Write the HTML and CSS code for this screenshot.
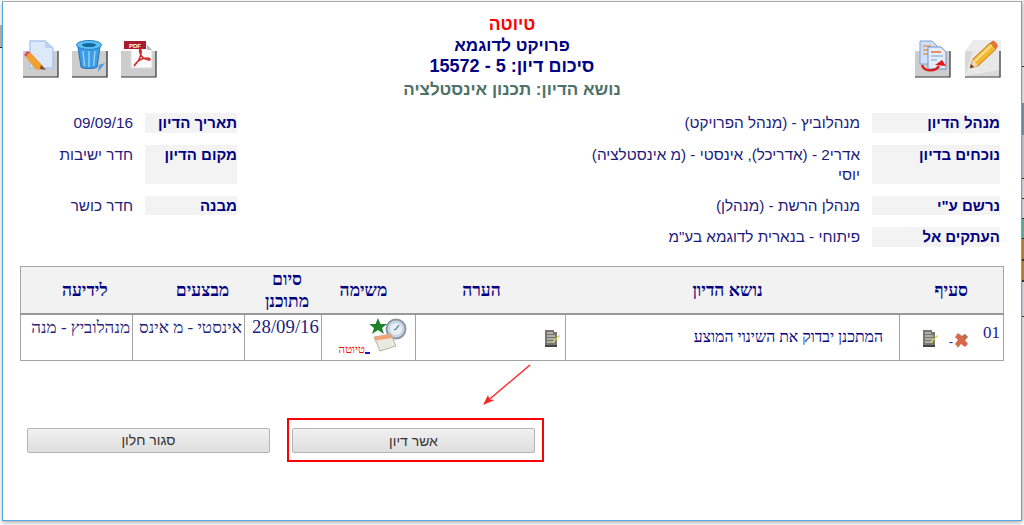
FILE: index.html
```html
<!DOCTYPE html>
<html lang="he" dir="rtl">
<head>
<meta charset="utf-8">
<title>טיוטה</title>
<link rel="stylesheet" href="styles.css">
</head>
<body>
<div class="desk">
  <main class="window">
    <header class="top">
      <div class="tools tools-end">
        <!-- pencil -->
        <svg class="tool" viewBox="0 0 36 38">
          <path d="M0 11L8 0H36V37H0z" fill="#ececec"/>
          <path d="M0 36V11H35V36z" fill="#d9d9d9"/>
          <path d="M0 36L8 11H35V30z" fill="#e8e8e8"/>
          <path d="M35 11V37H0" fill="none" stroke="#333" stroke-width="1.2"/>
          <path d="M8 19L25 3l6 6L13 26 5 28z" fill="#f2b632" stroke="#c77a1c" stroke-width="1"/>
          <path d="M10 21L27 5" stroke="#fbe08a" stroke-width="2"/>
          <path d="M25 3l2-2c2-1 5 2 6 5l-2 3z" fill="#e0763a"/>
          <path d="M8 19l5 7-8 2z" fill="#f0d9b0"/>
          <path d="M5 28l1-4 3 3z" fill="#5a3a1a"/>
        </svg>
        <!-- copy with red arrow -->
        <svg class="tool" viewBox="0 0 36 38">
          <rect x="0" y="11" width="35" height="26" fill="#cdcdcd"/>
          <path d="M35 11V37H0" fill="none" stroke="#333" stroke-width="1.2"/>
          <path d="M5 1H17L22 6V24H5z" fill="#cfe0f6" stroke="#7f9fd6"/>
          <path d="M8 6H16M8 10H18M8 14H18" stroke="#e8955a" stroke-width="1.3"/>
          <path d="M13 7H26L31 12V29H13z" fill="#e4eefb" stroke="#6f90cc"/>
          <path d="M16 12H26" stroke="#e8753a" stroke-width="1.6"/>
          <path d="M16 16H28M16 20H22" stroke="#9fb8e0" stroke-width="1.3"/>
          <path d="M7 25c2 7 13 7 17 1" fill="none" stroke="#e01818" stroke-width="2.4"/>
          <path d="M20 25l7-5 4 6z" fill="#e01818"/>
        </svg>
      </div>
      <div class="title">
        <div class="t-draft">טיוטה</div>
        <div class="t-project">פרויקט לדוגמא</div>
        <div class="t-summary">סיכום דיון: 5 - 15572</div>
        <div class="t-subject">נושא הדיון: תכנון אינסטלציה</div>
      </div>
      <div class="tools tools-start">
        <!-- pdf -->
        <svg class="tool" viewBox="0 0 36 38">
          <rect x="0" y="11" width="35" height="26" fill="#cdcdcd"/>
          <path d="M35 11V37H0" fill="none" stroke="#333" stroke-width="1.2"/>
          <path d="M10 5H26L31 10V28H10z" fill="#fbfbfb" stroke="#ddd"/>
          <path d="M26 5l5 5h-5z" fill="#bbb"/>
          <rect x="3" y="1" width="22" height="8" fill="#a81c2c"/>
          <text x="14" y="8" class="pdf-word">PDF</text>
          <path d="M13 26c4-3 8-11 7-16-1-2-2 0-1 3 1 4 5 7 9 7 2 0 1-2-2-2-5 0-10 3-13 8z" fill="none" stroke="#cf2a2a" stroke-width="1.5"/>
        </svg>
        <!-- trash -->
        <svg class="tool" viewBox="0 0 36 38">
          <rect x="0" y="11" width="35" height="26" fill="#cdcdcd"/>
          <path d="M35 11V37H0" fill="none" stroke="#222" stroke-width="1.2"/>
          <path d="M27 25l6-2-7 9z" fill="#4a9be0"/>
          <path d="M6 7L9 27c1 2 14 2 16 0L28 7z" fill="#3e9ce4" stroke="#1e6fb8"/>
          <ellipse cx="17" cy="5" rx="12.500" ry="4.500" fill="#5cc0f0" stroke="#2a80c8"/>
          <ellipse cx="17" cy="5" rx="7" ry="2" fill="#14679f"/>
          <path d="M11 11l1.500 15M17 11v16M23 11l-1.500 15" stroke="#9fd8f8" stroke-width="1.300"/>
        </svg>
        <!-- edit document -->
        <svg class="tool" viewBox="0 0 36 38">
          <rect x="0" y="11" width="35" height="26" fill="#cdcdcd"/>
          <path d="M35 11V37H0" fill="none" stroke="#333" stroke-width="1.2"/>
          <path d="M7 1H22L30 8V28H7z" fill="#dce9fb" stroke="#a9c6ee" stroke-width="1.4"/>
          <path d="M22 1v7h8z" fill="#b9d2f2"/>
          <path d="M7 12L21 27l-2 1-2 2-5-1L3 17z" fill="#f0a030"/>
          <path d="M3 17l-2-2 3-4 3 1z" fill="#e0506a"/>
          <path d="M18 25l5 5-6-1z" fill="#6a4a2a"/>
        </svg>
      </div>
    </header>

    <section class="info">
      <div class="label">מנהל הדיון</div>
      <div class="value">מנהלוביץ - (מנהל הפרויקט)</div>
      <div class="label">תאריך הדיון</div>
      <div class="value">09/09/16</div>

      <div class="label">נוכחים בדיון</div>
      <div class="value">אדרי2 - (אדריכל), אינסטי - (מ אינסטלציה)<br>יוסי</div>
      <div class="label">מקום הדיון</div>
      <div class="value">חדר ישיבות</div>

      <div class="label">נרשם ע"י</div>
      <div class="value">מנהלן הרשת - (מנהלן)</div>
      <div class="label">מבנה</div>
      <div class="value">חדר כושר</div>

      <div class="label">העתקים אל</div>
      <div class="value">פיתוחי - בנארית לדוגמא בע"מ</div>
    </section>

    <table class="grid">
      <colgroup>
        <col class="c-item"><col class="c-topic"><col class="c-note"><col class="c-task"><col class="c-date"><col class="c-who"><col class="c-cc">
      </colgroup>
      <thead>
        <tr>
          <th>סעיף</th>
          <th class="h-topic">נושא הדיון</th>
          <th class="h-note">הערה</th>
          <th class="h-task">משימה</th>
          <th class="h-date">סיום<br>מתוכנן</th>
          <th class="h-who">מבצעים</th>
          <th class="h-cc">לידיעה</th>
        </tr>
      </thead>
      <tbody>
        <tr>
          <td class="cell-item">
            <div class="item-row">
              <span class="num">01</span>
              <svg class="ico-x" viewBox="0 0 16 16">
                <path d="M5 1l4 3 3-2 3 3-3 3 3 4-3 3-4-3-3 3-3-3 3-4-3-3z" fill="#d9694a"/>
                <path d="M9 4l3-2 3 3-3 3zM5 12l2 2 -3 2z" fill="#8f7a5a" opacity=".6"/>
              </svg>
              <span class="dash">-</span>
              <svg class="ico-note" viewBox="0 0 16 19">
                <use href="#note"/>
              </svg>
            </div>
          </td>
          <td class="cell-topic">המתכנן יבדוק את השינוי המוצע</td>
          <td class="cell-note">
            <svg class="ico-note" viewBox="0 0 16 19"><use href="#note"/></svg>
          </td>
          <td class="cell-task">
            <div class="task">
              <svg class="ico-task" viewBox="0 0 38 34">
                <circle cx="26" cy="11" r="9.500" fill="#c9d6e2" stroke="#8b98a6" stroke-width="2"/>
                <circle cx="26" cy="11" r="6" fill="#e8eff5"/>
                <path d="M26 11l3-4M26 11l-2 1" stroke="#4a6a8a" stroke-width="1.200"/>
                <path d="M8 0l2.500 6H17l-5 4 2 6-6-4-6 4 2-6-5-4h6.500z" fill="#1f7f2a"/>
                <path d="M4 19L21 16l5 12-16 5z" fill="#ebe8e0" stroke="#b8b4aa"/>
                <path d="M4 19L21 16l1.500 4-17 2.500z" fill="#eda376"/>
              </svg>
              <span class="task-mark"></span>
              <span class="task-state">טיוטה</span>
            </div>
          </td>
          <td class="cell-date">28/09/16</td>
          <td class="cell-who"><div class="clip">אינסטי - מ אינס</div></td>
          <td class="cell-who"><div class="clip">מנהלוביץ - מנה</div></td>
        </tr>
      </tbody>
    </table>

    <div class="actions">
      <div class="highlight"><button class="btn">אשר דיון</button></div>
      <button class="btn">סגור חלון</button>
      <svg class="arrow" viewBox="0 0 56 48">
        <path d="M52 3L7 41" stroke="#f22" stroke-width="1.400" fill="none"/>
        <path d="M5 43L10 33l1.500 4.500 5 .5z" fill="#f22"/>
      </svg>
    </div>
  </main>
</div>

<svg class="defs" width="0" height="0">
  <defs>
    <g id="note">
      <path d="M1 1H10V3H13V17H1z" fill="#77776f"/>
      <path d="M3 4H9M3 7H11M3 10H11M3 13H11" stroke="#e8e8e4" stroke-width="1.100"/>
      <path d="M1 16H13V18H1z" fill="#45453f"/>
      <path d="M9 12L15 6l1 1-6 6-2 1z" fill="#d8cf48"/>
    </g>
  </defs>
</svg>
</body>
</html>
```
FILE: styles.css
```css
html, body {
  margin: 0;
  height: 525px;
  overflow: hidden;
  background: #fff;
}

.desk {
  box-sizing: border-box;
  width: 1024px;
  height: 525px;
  padding: 1px 2px 4px 2px;
  display: flex;
  background-color: #fff;
  background-image:
    linear-gradient(#fff 0 25px, #b9b9b9 25px 47px, #333 47px 48px, #fff 48px),
    linear-gradient(#e8ecef 0 66px, #333 66px 67px, #e8ecef 67px 103px, #7f98a8 103px 135px, #ccd 135px 178px, #333 178px 179px, #dde 179px 198px, #333 198px 199px, #dde 199px 218px, #333 218px 219px, #6ba 219px 238px, #333 238px 239px, #c98a30 239px 259px, #333 259px 261px, #c98a30 261px 280px, #333 280px 282px, #dde 282px 316px, #333 316px 317px, #e8ecef 317px 520px, #fff 520px);
  background-size: 2px 100%, 2px 100%;
  background-position: left top, right top;
  background-repeat: no-repeat;
  font-family: "Liberation Sans", Arial, sans-serif;
}

.window {
  flex: 1;
  min-width: 0;
  background: #fff;
  border: 1px solid #58a6e2;
  border-top: 1px solid #a9a9a9;
  box-shadow: 0 2px 4px rgba(0, 0, 0, .3);
  position: relative;
}

/* header */
.top {
  display: grid;
  grid-template-columns: 1fr auto 1fr;
  height: 111px;
}

.tools {
  display: flex;
  padding-top: 38px;
  align-items: flex-start;
  box-sizing: border-box;
}

.tools-end {
  padding-right: 20px;
  gap: 14px;
}

.tools-start {
  padding-left: 20px;
  gap: 13px;
  justify-content: flex-end;
}

.tool {
  width: 36px;
  height: 38px;
  display: block;
  flex: none;
}

.pdf-word {
  font: bold 6px "Liberation Sans", Arial, sans-serif;
  fill: #fff;
  text-anchor: middle;
}

.title {
  padding-top: 12px;
  text-align: center;
  font-weight: bold;
  color: #000080;
  font-size: 17px;
  line-height: 21px;
}

.t-draft {
  color: #f00;
  font-size: 17.500px;
}

.t-summary {
  font-size: 18px;
}

.t-subject {
  color: #4d7268;
  line-height: 25px;
}

/* details */
.info {
  display: grid;
  grid-template-columns: 128px 611px 92px 113px;
  grid-template-rows: 20px 39px 19px 20px;
  gap: 12px;
  padding-right: 21px;
  color: #000080;
  line-height: 20px;
}

.label {
  background: #f3f3f3;
  font-weight: bold;
  font-size: 15px;
}

.value {
  font-size: 15.300px;
  color: #1c1c7c;
}

/* table */
.grid {
  border-collapse: collapse;
  table-layout: fixed;
  width: 983px;
  margin: 19px 17px 0 0;
  font-family: "Liberation Serif", "Times New Roman", serif;
  color: #000080;
}

.c-item { width: 104px; }
.c-topic { width: 334px; }
.c-note { width: 150px; }
.c-task { width: 94px; }
.c-date { width: 77px; }
.c-who { width: 112px; }
.c-cc { width: 112px; }

.grid th {
  box-sizing: border-box;
  height: 47px;
  padding: 0;
  background: #f2f2f2;
  border: 1px solid #a3a3a3;
  border-bottom: 2px solid #999;
  border-inline-width: 0;
  font-size: 17.500px;
  line-height: 22px;
  text-align: center;
}

.grid th:first-child { border-right-width: 1px; }
.grid th:last-child { border-left-width: 1px; }

.grid .h-topic { padding-right: 10px; }
.grid .h-note { padding-right: 18px; }
.grid .h-task { padding-right: 10px; }
.grid .h-date { padding-left: 8px; }
.grid .h-who { padding-left: 28px; }
.grid .h-cc { padding-left: 16px; }

.grid td {
  box-sizing: border-box;
  height: 47px;
  padding: 0;
  border: 1px solid #a3a3a3;
  vertical-align: top;
}

.item-row {
  display: flex;
  align-items: flex-start;
  padding: 8px 3px 0 0;
}

.num {
  font-size: 17px;
  line-height: 20px;
  color: #1a1a9a;
}

.ico-x {
  width: 16px;
  height: 16px;
  margin: 9px 14px 0 0;
}

.dash {
  color: #1a1aa0;
  font: 13px/16px "Liberation Sans", Arial, sans-serif;
  margin-top: 11px;
}

.ico-note {
  width: 16px;
  height: 19px;
  display: block;
}

.item-row .ico-note {
  margin: 6px 11px 0 0;
}

.grid .cell-topic {
  padding: 12px 16px 0 0;
  font-size: 15.800px;
  line-height: 20px;
}

.cell-note .ico-note {
  margin: 14px 5px 0 0;
}

.task {
  display: flex;
  align-items: flex-start;
  padding: 3px 7px 0 0;
}

.ico-task {
  width: 38px;
  height: 34px;
  flex: none;
}

.task-state {
  margin-top: 25px;
  color: #f00;
  font-size: 11.500px;
  line-height: 12px;
}

.task-mark {
  width: 5px;
  height: 2px;
  background: #1414d8;
  margin-top: 34px;
  flex: none;
}

.grid .cell-date {
  font-size: 18.800px;
  line-height: 22px;
  padding: 1px 0 0 5px;
  text-align: center;
  color: #22227a;
}

.grid .cell-who {
  padding: 3px 2px 0 2px;
  font-size: 17px;
  line-height: 20px;
  color: #22227a;
}

.clip {
  white-space: nowrap;
  overflow: hidden;
}

/* buttons */
.actions {
  display: flex;
  align-items: center;
  gap: 17px;
  position: relative;
  margin: 57px 477px 0 0;
}

.highlight {
  border: 2px solid #f00;
  padding: 8px 7px 7px 7px;
  box-sizing: border-box;
  width: 257px;
  height: 44px;
  display: flex;
}

.btn {
  width: 243px;
  height: 25px;
  flex: none;
  padding: 0;
  box-sizing: border-box;
  border: 1px solid #b4b4b4;
  border-radius: 2px;
  background: linear-gradient(#f1f1f1, #dedede);
  font: 14px "Liberation Sans", Arial, sans-serif;
  color: #333;
}

.arrow {
  position: absolute;
  width: 56px;
  height: 48px;
  top: -56px;
  left: 475px;
}

.defs {
  position: absolute;
}
```
